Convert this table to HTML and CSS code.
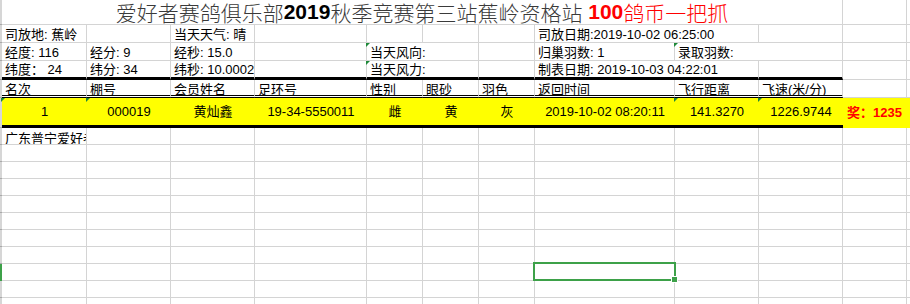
FILE: index.html
```html
<!DOCTYPE html>
<html lang="zh-CN">
<head>
<meta charset="utf-8">
<title>爱好者赛鸽俱乐部</title>
<link rel="stylesheet" href="styles.css">
</head>
<body>
<div class="sheet">
  <!-- row 1: title -->
  <div class="g"></div>
  <div class="c title s10"><span class="tline"><span class="tp tg">爱好者赛鸽俱乐部</span><span class="tp tb">2019</span><span class="tp tg">秋季竞赛第三站蕉岭资格站</span> <span class="tp trb">100</span><span class="tp tr">鸽币一把抓</span></span></div>
  <div class="c"></div>
  <div class="c"></div>

  <!-- row 2 -->
  <div class="g"></div>
  <div class="c info">司放地: 蕉岭</div>
  <div class="c info"></div>
  <div class="c info">当天天气: 晴</div>
  <div class="c info"></div>
  <div class="c info"></div>
  <div class="c info"></div>
  <div class="c info"></div>
  <div class="c info s2">司放日期:2019-10-02 06:25:00</div>
  <div class="c info"></div>
  <div class="c info"></div>
  <div class="c info"></div>

  <!-- row 3 -->
  <div class="g"></div>
  <div class="c info">经度: 116</div>
  <div class="c info">经分: 9</div>
  <div class="c info">经秒: 15.0</div>
  <div class="c info"></div>
  <div class="c info s2 tri">当天风向:</div>
  <div class="c info"></div>
  <div class="c info">归巢羽数: 1</div>
  <div class="c info s2 tri">录取羽数:</div>
  <div class="c info"></div>
  <div class="c info"></div>

  <!-- row 4 -->
  <div class="g"></div>
  <div class="c info bk">纬度： 24</div>
  <div class="c info bk">纬分: 34</div>
  <div class="c info bk">纬秒: 10.0002</div>
  <div class="c info bk"></div>
  <div class="c info bk s2 tri">当天风力:</div>
  <div class="c info bk"></div>
  <div class="c info bk s2">制表日期: 2019-10-03 04:22:01</div>
  <div class="c info bk"></div>
  <div class="c info"></div>
  <div class="c info"></div>

  <!-- row 5: header -->
  <div class="g"></div>
  <div class="c head dbl">名次</div>
  <div class="c head dbl">棚号</div>
  <div class="c head dbl">会员姓名</div>
  <div class="c head dbl">足环号</div>
  <div class="c head dbl">性别</div>
  <div class="c head dbl">眼砂</div>
  <div class="c head dbl">羽色</div>
  <div class="c head dbl">返回时间</div>
  <div class="c head dbl">飞行距离</div>
  <div class="c head dbl">飞速(米/分)</div>
  <div class="c head"></div>
  <div class="c head"></div>

  <!-- row 6: result -->
  <div class="g"></div>
  <div class="c y bk num tri">1</div>
  <div class="c y bk num tri">000019</div>
  <div class="c y bk num">黄灿鑫</div>
  <div class="c y bk num">19-34-5550011</div>
  <div class="c y bk num">雌</div>
  <div class="c y bk num">黄</div>
  <div class="c y bk num">灰</div>
  <div class="c y bk num">2019-10-02 08:20:11</div>
  <div class="c y bk num tri">141.3270</div>
  <div class="c y bk num tri">1226.9744</div>
  <div class="c y prize">奖：1235</div>
  <div class="c y"></div>

  <!-- row 7 -->
  <div class="g"></div>
  <div class="c low">广东普宁爱好者赛鸽俱乐部</div>
  <div class="c"></div><div class="c"></div><div class="c"></div><div class="c"></div><div class="c"></div><div class="c"></div><div class="c"></div><div class="c"></div><div class="c"></div><div class="c"></div><div class="c"></div>

  <!-- empty rows -->
  <div class="g"></div>
  <div class="c"></div><div class="c"></div><div class="c"></div><div class="c"></div><div class="c"></div><div class="c"></div><div class="c"></div><div class="c"></div><div class="c"></div><div class="c"></div><div class="c"></div><div class="c"></div>
  <div class="g"></div>
  <div class="c"></div><div class="c"></div><div class="c"></div><div class="c"></div><div class="c"></div><div class="c"></div><div class="c"></div><div class="c"></div><div class="c"></div><div class="c"></div><div class="c"></div><div class="c"></div>
  <div class="g"></div>
  <div class="c"></div><div class="c"></div><div class="c"></div><div class="c"></div><div class="c"></div><div class="c"></div><div class="c"></div><div class="c"></div><div class="c"></div><div class="c"></div><div class="c"></div><div class="c"></div>
  <div class="g"></div>
  <div class="c"></div><div class="c"></div><div class="c"></div><div class="c"></div><div class="c"></div><div class="c"></div><div class="c"></div><div class="c"></div><div class="c"></div><div class="c"></div><div class="c"></div><div class="c"></div>
  <div class="g"></div>
  <div class="c"></div><div class="c"></div><div class="c"></div><div class="c"></div><div class="c"></div><div class="c"></div><div class="c"></div><div class="c"></div><div class="c"></div><div class="c"></div><div class="c"></div><div class="c"></div>
  <div class="g"></div>
  <div class="c"></div><div class="c"></div><div class="c"></div><div class="c"></div><div class="c"></div><div class="c"></div><div class="c"></div><div class="c"></div><div class="c"></div><div class="c"></div><div class="c"></div><div class="c"></div>
  <div class="g"></div>
  <div class="c"></div><div class="c"></div><div class="c"></div><div class="c"></div><div class="c"></div><div class="c"></div><div class="c"></div><div class="c"></div><div class="c"></div><div class="c"></div><div class="c"></div><div class="c"></div>
  <div class="g act"></div>
  <div class="c"></div><div class="c"></div><div class="c"></div><div class="c"></div><div class="c"></div><div class="c"></div><div class="c"></div><div class="c sel"><span class="handle"></span></div><div class="c"></div><div class="c"></div><div class="c"></div><div class="c"></div>
  <div class="g"></div>
  <div class="c"></div><div class="c"></div><div class="c"></div><div class="c"></div><div class="c"></div><div class="c"></div><div class="c"></div><div class="c"></div><div class="c"></div><div class="c"></div><div class="c"></div><div class="c"></div>
  <div class="g"></div>
  <div class="c"></div><div class="c"></div><div class="c"></div><div class="c"></div><div class="c"></div><div class="c"></div><div class="c"></div><div class="c"></div><div class="c"></div><div class="c"></div><div class="c"></div><div class="c"></div>
</div>
</body>
</html>
```

FILE: styles.css
```css
html, body {
  margin: 0;
  padding: 0;
  background: #ffffff;
  overflow: hidden;
}

body {
  width: 910px;
  height: 304px;
  font-family: "Liberation Sans", "Noto Sans CJK SC", sans-serif;
  font-size: 13px;
  color: #000000;
}

.sheet {
  display: grid;
  grid-template-columns: 2px 85px 84px 84px 112px 56px 56px 56px 140px 84px 84px 64px 1fr;
  grid-template-rows: 25px 18px 18px 19px 18px 30px 17px repeat(10, 17px);
  width: 910px;
}

.g {
  background: #d6d6d6;
  border-bottom: 1px solid #a9a9a9;
  box-sizing: border-box;
}

.g.act {
  background: #3da149;
  border-bottom: none;
}

.c {
  box-sizing: border-box;
  border-right: 1px solid #d4d4d4;
  border-bottom: 1px solid #d4d4d4;
  overflow: hidden;
  white-space: nowrap;
  padding-left: 3px;
  display: flex;
  align-items: center;
  line-height: 16px;
  min-width: 0;
}

.s2 { grid-column: span 2; }
.s10 { grid-column: span 10; }

.title {
  justify-content: center;
  padding-left: 0;
  font-size: 21px;
  line-height: 24px;
  overflow: visible;
}

.tline {
  display: block;
  height: 24px;
  line-height: 24px;
  white-space: pre;
}

.tp {
  display: inline-block;
  height: 24px;
  line-height: 24px;
  vertical-align: top;
}

.tg {
  color: #3a3a3a;
  font-family: "Noto Sans CJK SC", sans-serif;
  font-weight: 300;
}

.tb {
  font-family: "Liberation Sans", sans-serif;
  font-weight: bold;
  color: #000000;
}

.trb {
  font-family: "Liberation Sans", sans-serif;
  font-weight: bold;
  color: #ff0000;
}

.tr {
  font-family: "Noto Sans CJK SC", sans-serif;
  font-weight: 300;
  color: #ff0000;
}

.info {
  padding-top: 2px;
}

.bk {
  border-bottom: 3px solid #000000;
}

.head {
  align-items: flex-start;
  padding-top: 2px;
  line-height: 15px;
}

.dbl {
  border-bottom: 3px double #000000;
}

.y {
  background: #ffff00;
  border-right: none;
}

.c.y:not(.bk) {
  border-bottom: none;
}

.num {
  justify-content: center;
  padding-left: 0;
}

.prize {
  color: #ff0000;
  font-weight: bold;
  padding-left: 4px;
}

.low {
  align-items: flex-start;
  padding-top: 3px;
  line-height: 15px;
}

.tri {
  position: relative;
  overflow: visible;
}

.tri::before {
  content: "";
  position: absolute;
  top: 0;
  left: -1px;
  width: 0;
  height: 0;
  border-top: 4px solid #1f8a3a;
  border-right: 4px solid transparent;
}

.sel {
  position: relative;
  overflow: visible;
}

.sel::after {
  content: "";
  position: absolute;
  left: -2px;
  top: -2px;
  right: -2px;
  bottom: -1px;
  border: 2px solid #3da149;
  z-index: 1;
}

.handle {
  position: absolute;
  right: -4px;
  bottom: -3px;
  width: 5px;
  height: 5px;
  background: #3da149;
  border: 1px solid #ffffff;
  z-index: 2;
}
```
